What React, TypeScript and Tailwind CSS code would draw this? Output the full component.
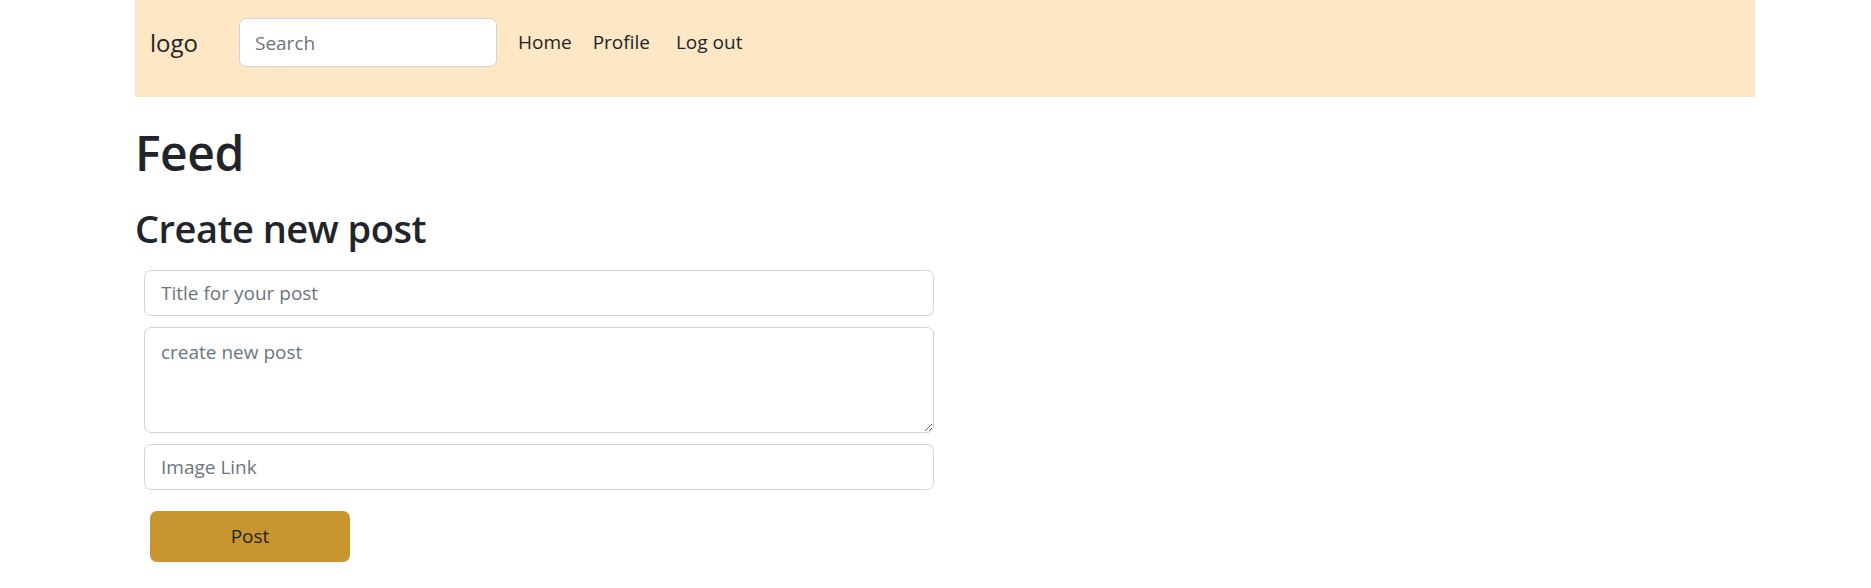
import React from "react";

export default function App() {
  const font = { fontFamily: '"Open Sans", "Noto Sans", sans-serif' };
  return (
    <div className="min-h-[588px] bg-white text-[#212529]" style={font}>
      <div className="ml-[135px] w-[1620px]">
        <nav className="flex h-[97px] items-center bg-[#fde7c4] pb-[12px] pl-[15px]">
          <span className="text-[24px] leading-none text-[#212529]">logo</span>
          <input
            className="ml-[41px] h-[49px] w-[258px] rounded-[7px] border border-[#ced4da] bg-white px-[15px] text-[19px] outline-none placeholder:text-[#6c757d]"
            placeholder="Search"
          />
          <a className="ml-[21px] text-[19px] text-[#212529]">Home</a>
          <a className="ml-[21px] text-[19px] text-[#212529]">Profile</a>
          <a className="ml-[26px] text-[19px] text-[#212529]">Log out</a>
        </nav>
        <h1 className="mt-[26px] text-[48px] font-semibold leading-[60px] tracking-[-0.5px] text-[#212529]">Feed</h1>
        <h2 className="mt-[21px] text-[38px] font-semibold leading-[48px] tracking-[-0.5px] text-[#212529]">Create new post</h2>
        <form className="mt-[18px] flex w-[800px] flex-col gap-[11px] pl-[9px]">
          <input
            className="h-[46px] w-[790px] rounded-[7px] border border-[#ced4da] px-[16px] text-[19px] outline-none placeholder:text-[#6c757d]"
            placeholder="Title for your post"
          />
          <textarea
            className="h-[106px] w-[790px] rounded-[7px] border border-[#ced4da] px-[16px] py-[10px] text-[19px] outline-none placeholder:text-[#6c757d]"
            placeholder="create new post"
          />
          <input
            className="h-[46px] w-[790px] rounded-[7px] border border-[#ced4da] px-[16px] text-[19px] outline-none placeholder:text-[#6c757d]"
            placeholder="Image Link"
          />
          <div className="pt-[10px] pl-[6px]">
            <button
              type="button"
              className="h-[51px] w-[200px] rounded-[7px] border-0 bg-[#c9952e] text-[19px] text-[#212529]"
            >
              Post
            </button>
          </div>
        </form>
      </div>
    </div>
  );
}
